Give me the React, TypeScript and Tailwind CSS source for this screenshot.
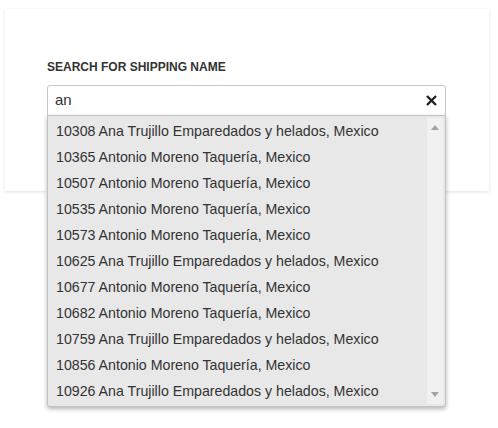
const results = [
	"10308 Ana Trujillo Emparedados y helados, Mexico",
	"10365 Antonio Moreno Taquería, Mexico",
	"10507 Antonio Moreno Taquería, Mexico",
	"10535 Antonio Moreno Taquería, Mexico",
	"10573 Antonio Moreno Taquería, Mexico",
	"10625 Ana Trujillo Emparedados y helados, Mexico",
	"10677 Antonio Moreno Taquería, Mexico",
	"10682 Antonio Moreno Taquería, Mexico",
	"10759 Ana Trujillo Emparedados y helados, Mexico",
	"10856 Antonio Moreno Taquería, Mexico",
	"10926 Ana Trujillo Emparedados y helados, Mexico",
];

export default function App() {
	return (
		<main
			className="relative w-[498px] h-[428px] bg-white text-[#333]"
			style={{ fontFamily: '"Liberation Sans", Arial, sans-serif' }}
		>
			<div className="pt-[9px] pl-[5px]">
				{/* Card */}
				<section className="relative w-[484px] h-[182px] bg-white shadow-[0_1px_3px_rgba(0,0,0,0.12)] pt-[51px] pl-[42px]">
					<label className="block text-[12px] font-bold uppercase leading-[14px]">
						Search for shipping name
					</label>

					<div className="relative mt-[11px] w-[399px]">
						<div className="flex items-center h-[31px] border border-[#c8c8c8] rounded-t-[3px] bg-white pl-[7px] pr-[8px]">
							<span className="flex-1 text-[15px]">an</span>
							<svg width="11" height="11" viewBox="0 0 11 11" className="text-[#222]">
								<path d="M1 1 L10 10 M10 1 L1 10" stroke="currentColor" strokeWidth="2.4" />
							</svg>
						</div>

						{/* Dropdown */}
						<div className="absolute z-10 left-0 top-[30px] w-[399px] h-[292px] bg-[#e8e8e8] border border-[#c4c4c4] rounded-b-[3px] shadow-[0_2px_4px_rgba(0,0,0,0.3)] flex">
							<ul className="flex-1 pt-[2px]">
								{results.map((r) => (
									<li key={r} className="h-[26px] leading-[26px] pl-[8px] text-[14.2px] text-[#333] whitespace-nowrap">
										{r}
									</li>
								))}
							</ul>
							<div className="w-[16px] mr-[2px] my-[2px] bg-[#f1f1f1] flex flex-col items-center justify-between py-[7px]">
								<svg width="8" height="5" viewBox="0 0 8 5">
									<path d="M0 5 L4 0 L8 5 Z" fill="#a3a3a3" />
								</svg>
								<svg width="8" height="5" viewBox="0 0 8 5">
									<path d="M0 0 L4 5 L8 0 Z" fill="#a3a3a3" />
								</svg>
							</div>
						</div>
					</div>
				</section>
			</div>
		</main>
	);
}
